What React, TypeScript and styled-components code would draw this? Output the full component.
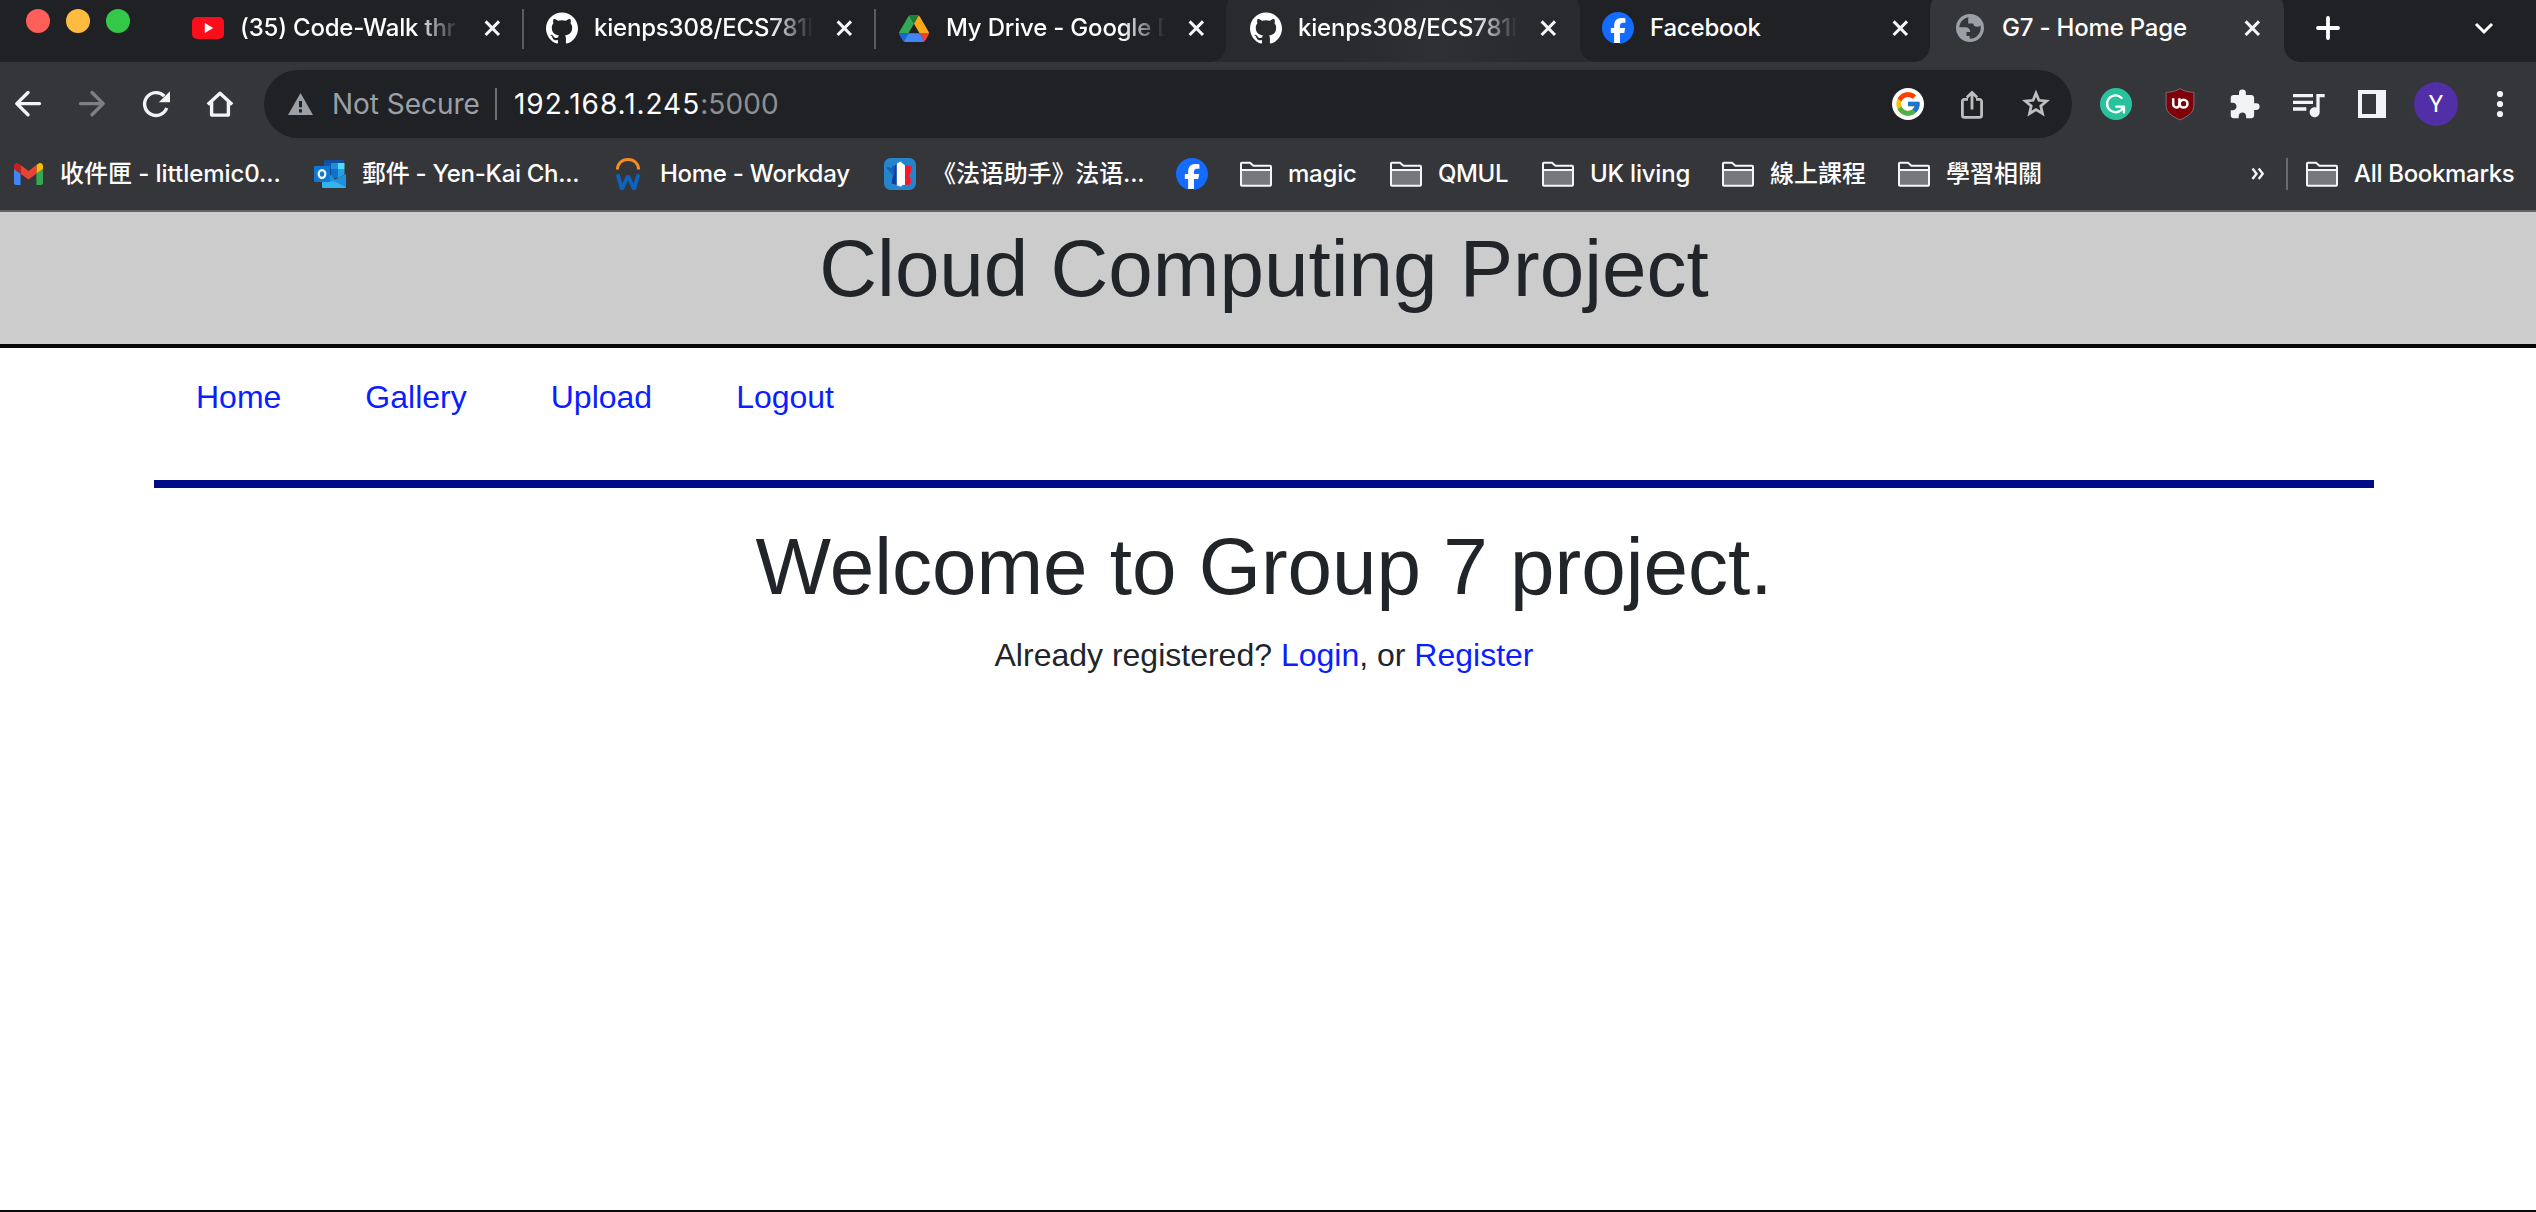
import React from "react";
import styled, { createGlobalStyle, css } from "styled-components";
import { FcGoogle } from "react-icons/fc";
import { SiFacebook, SiGithub } from "react-icons/si";
import { MdExtension, MdQueueMusic } from "react-icons/md";

const ui = `Inter, "Noto Sans CJK TC", sans-serif`;
const pageFont = `"Liberation Sans", Arial, sans-serif`;

const GlobalStyle = createGlobalStyle`
  *, *::before, *::after { box-sizing: border-box; }
  body { margin: 0; background: #fff; overflow: hidden; }
  svg { display: block; flex: none; }
`;

/* ---------- window ---------- */

const Window = styled.div`
  display: flex;
  flex-direction: column;
  width: 2536px;
  height: 1212px;
  border-bottom: 2px solid #0a090b;
  overflow: hidden;
`;

/* ---------- tab strip ---------- */

const TabStrip = styled.div`
  display: flex;
  height: 62px;
  background: #202124;
  overflow: hidden;
`;

const TrafficLights = styled.div`
  display: flex;
  gap: 16px;
  width: 172px;
  padding: 9px 0 0 26px;
`;

const Light = styled.span<{ $color: string }>`
  width: 24px;
  height: 24px;
  border-radius: 50%;
  background: ${(p) => p.$color};
`;

type TabState = "idle" | "hover" | "active";

const tabFill = (color: string) => css`
  &::before {
    content: "";
    position: absolute;
    z-index: -1;
    top: -7px;
    bottom: 0;
    left: -2px;
    right: 0;
    border-radius: 16px 16px 0 0;
    background: ${color};
  }
  &::after {
    content: "";
    position: absolute;
    z-index: -1;
    bottom: 0;
    left: -18px;
    right: -16px;
    height: 16px;
    background:
      radial-gradient(circle at 0 0, transparent 15.5px, ${color} 16.2px) left / 16px 16px no-repeat,
      radial-gradient(circle at 16px 0, transparent 15.5px, ${color} 16.2px) right / 16px 16px no-repeat;
  }
`;

const TabBox = styled.div<{ $state: TabState; $divider?: boolean }>`
  position: relative;
  isolation: isolate;
  display: flex;
  align-items: center;
  flex: none;
  width: 352px;
  height: 62px;
  padding: 0 23px 6px 22px;
  &:nth-child(2) {
    padding-left: 20px;
  }
  ${(p) => p.$state === "active" && tabFill("#35363a")}
  ${(p) => p.$state === "hover" && tabFill("#292a2d")}
  ${(p) =>
    p.$divider &&
    css`
      background: linear-gradient(#5b5c5f, #5b5c5f) right 9px / 2px 40px no-repeat;
    `}
`;

const HoverGlow = styled.span`
  position: absolute;
  z-index: -1;
  inset: 0;
  background: radial-gradient(circle 100px at 208px 48px, #2f3034, #2f303400);
`;

const Favicon = styled.span`
  display: grid;
  place-items: center;
  flex: none;
  width: 32px;
  height: 32px;
`;

const TabTitle = styled.span<{ $fade?: boolean }>`
  flex: 1;
  min-width: 0;
  margin: 0 22px 0 16px;
  overflow: hidden;
  white-space: nowrap;
  font: 450 24px/32px ${ui};
  letter-spacing: -0.2px;
  color: #fff;
  ${(p) =>
    p.$fade &&
    css`
      mask-image: linear-gradient(90deg, #000 176px, transparent 219px);
    `}
`;

const StripTools = styled.div`
  display: flex;
  flex: 1;
  justify-content: space-between;
  align-items: center;
  padding: 0 42px 6px 32px;
`;

/* ---------- toolbar ---------- */

const Toolbar = styled.div`
  display: flex;
  align-items: center;
  gap: 24px;
  height: 84px;
  padding: 0 16px 0 8px;
  background: #35363a;
`;

const Slot = styled.span`
  display: grid;
  place-items: center;
  flex: none;
  width: 40px;
  height: 40px;
  color: #f1f3f4;
`;

const DimSlot = styled(Slot)`
  color: #bdbdbe;
`;

const MusicSlot = styled(Slot)`
  padding-bottom: 4px;
  padding-right: 2px;
`;

const Omnibox = styled.div`
  display: flex;
  align-items: center;
  flex: none;
  width: 1808px;
  height: 68px;
  padding: 0 16px 0 24px;
  border-radius: 34px;
  background: #202124;
  font: 400 28px/36px ${ui};
  white-space: nowrap;
`;

const Security = styled.span`
  width: 163px;
  margin-left: 19px;
  color: #9aa0a6;
  letter-spacing: -0.03px;
`;

const OmniDivider = styled.span`
  width: 2px;
  height: 32px;
  margin-right: 17px;
  background: #6f7073;
`;

const Host = styled.span`
  color: #fff;
  letter-spacing: 0.95px;
`;

const Port = styled.span`
  flex: 1;
  color: #8e8f91;
  letter-spacing: 0.1px;
`;

const OmniActions = styled.div`
  display: flex;
  gap: 24px;
`;

const GoogleBadge = styled.span`
  display: grid;
  place-items: center;
  width: 32px;
  height: 32px;
  border-radius: 50%;
  background: #fff;
`;

const Avatar = styled.span`
  display: grid;
  place-items: center;
  width: 44px;
  height: 44px;
  margin: -2px;
  border-radius: 50%;
  background: #512fa6;
  color: #fff;
  font: 400 24px/44px Roboto, sans-serif;
`;

/* ---------- bookmarks ---------- */

const BookmarksBar = styled.div`
  display: flex;
  align-items: center;
  gap: 32px;
  height: 66px;
  padding: 0 22px 8px 12px;
  border-bottom: 2px solid #616265;
  background: #35363a;
`;

const BookmarkItem = styled.span`
  display: flex;
  align-items: center;
  flex: none;
  gap: 16px;
`;

const BookmarkLabel = styled.span<{ $width: number; $spacing?: number }>`
  width: ${(p) => p.$width}px;
  white-space: nowrap;
  font: 450 24px/32px ${ui};
  letter-spacing: ${(p) => p.$spacing ?? -0.2}px;
  color: #fff;
`;

const BookmarksEnd = styled.div`
  display: flex;
  align-items: center;
  gap: 18px;
  margin-left: auto;
`;

const BookmarksDivider = styled.span`
  width: 2px;
  height: 32px;
  margin-left: 3px;
  background: #6a6b6e;
`;

/* ---------- web page ---------- */

const Page = styled.div`
  flex: 1;
  background: #fff;
  color: #212529;
  font: 400 32px/48px ${pageFont};
`;

const SiteHeader = styled.header`
  height: 136px;
  padding: 9px 8px 0 0;
  border-bottom: 4px solid #080808;
  background: #ccc;
  text-align: center;
`;

const Heading = styled.h1`
  margin: 0;
  font: 400 80px/96px ${pageFont};
`;

const Container = styled.div`
  width: 2220px;
  margin-left: 154px;
`;

const Nav = styled.nav`
  display: flex;
  gap: 84px;
  height: 140px;
  padding: 25px 42px 0;
  border-bottom: 8px solid #000b85;
`;

const Link = styled.a`
  color: #0a1eff;
  text-decoration: none;
`;

const Main = styled.main`
  padding-top: 31px;
  text-align: center;
`;

const Prompt = styled.p`
  margin: 16px 0 0;
`;

/* ---------- icons ---------- */

const stroke = { fill: "none", stroke: "currentColor" } as const;

const Close = () => (
  <svg width="17" height="17" viewBox="0 0 17 17" {...stroke} stroke="#f4f5f6" strokeWidth="3">
    <path d="M1.6 1.4 15 15M15 1.4 1.6 15" />
  </svg>
);

const YouTube = () => (
  <svg width="32" height="32" viewBox="0 0 32 32">
    <rect y="5" width="32" height="22" rx="5" fill="#fc0d1b" />
    <path d="M12.8 11v10l8.4-5z" fill="#fff" />
  </svg>
);

const GitHub = () => <SiGithub size={32} color="#fff" />;

const FacebookDisc = styled.span`
  display: grid;
  width: 32px;
  height: 32px;
  border-radius: 50%;
  background: radial-gradient(circle, #fff 15px, transparent 15.5px);
`;

const Facebook = () => (
  <FacebookDisc>
    <SiFacebook size={32} color="#146bff" />
  </FacebookDisc>
);

const Drive = () => (
  <svg width="30" height="27" viewBox="0 0 87.3 78">
    <path fill="#1967d2" d="m6.6 66.85 3.85 6.65c.8 1.4 1.95 2.5 3.3 3.3l13.75-23.8h-27.5c0 1.55.4 3.1 1.2 4.5z" />
    <path fill="#34a853" d="m43.65 25-13.75-23.8c-1.35.8-2.5 1.9-3.3 3.3l-25.4 44a9.06 9.06 0 0 0-1.2 4.5h27.5z" />
    <path fill="#ea4335" d="m73.55 76.8c1.35-.8 2.5-1.9 3.3-3.3l1.6-2.75 7.65-13.25c.8-1.4 1.2-2.95 1.2-4.5h-27.502l5.852 11.5z" />
    <path fill="#188038" d="m43.65 25 13.75-23.8c-1.35-.8-2.9-1.2-4.5-1.2h-18.5c-1.6 0-3.15.45-4.5 1.2z" />
    <path fill="#4285f4" d="m59.8 53h-32.3l-13.75 23.8c1.35.8 2.9 1.2 4.5 1.2h50.8c1.6 0 3.15-.45 4.5-1.2z" />
    <path fill="#fba919" d="m73.4 26.5-12.7-22c-.8-1.4-1.95-2.5-3.3-3.3l-13.75 23.8 16.15 28h27.45c0-1.55-.4-3.1-1.2-4.5z" />
  </svg>
);

const Globe = () => (
  <svg width="28" height="28" viewBox="0 0 28 28">
    <circle cx="14" cy="14" r="14" fill="#9aa0a6" />
    <path
      fill="#35363a"
      d="M12.600 3.200C7.400 4 3.600 8.200 3.300 13.300H9.500c2.600 0 4.700 2 4.700 4.600h-3.700v4.200h3.200v2.700c6.300 0 11-5 11-10.800 0-1-.1-1.800-.3-2.600-.8.900-1.900 1.400-3.200 1.400-2.300 0-3.800-1.200-4-3.300h-5V6.200c0-1.200.1-2.200.4-3z"
    />
  </svg>
);

const Plus = () => (
  <svg width="24" height="24" viewBox="0 0 24 24" {...stroke} stroke="#fff" strokeWidth="3.8" strokeLinecap="round">
    <path d="M12 2v20M2 12h20" />
  </svg>
);

const Chevron = () => (
  <svg width="20" height="14" viewBox="0 0 20 14" {...stroke} stroke="#fff" strokeWidth="3">
    <path d="m2 3 8 8 8-8" />
  </svg>
);

const Back = () => (
  <svg width="40" height="40" viewBox="0 0 40 40" {...stroke} strokeWidth="3.4" strokeLinecap="round" strokeLinejoin="round">
    <path d="M31.500 19.600H9M20 8.500 8.800 19.600 20 30.800" />
  </svg>
);

const Forward = () => (
  <svg width="40" height="40" viewBox="0 0 40 40" {...stroke} stroke="#7f8083" strokeWidth="3.4" strokeLinecap="round" strokeLinejoin="round">
    <path d="M8.500 19.600H31M20 8.500l11.200 11.100L20 30.800" />
  </svg>
);

const Reload = () => (
  <svg width="40" height="40" viewBox="0 0 40 40" {...stroke} strokeWidth="3.4">
    <path d="M30.700 24A11.400 11.400 0 1 1 28.300 12.200" />
    <path d="M34 7.200v11.100H22.800z" fill="currentColor" stroke="none" />
  </svg>
);

const Home = () => (
  <svg width="40" height="40" viewBox="0 0 40 40" {...stroke} strokeWidth="3.4" strokeLinejoin="round">
    <path d="M7.800 20.600 20 9.300l12.200 11.300M11.600 18v13.100h16.800V18" />
  </svg>
);

const Warning = () => (
  <svg width="25" height="24" viewBox="0 0 25 24">
    <path d="M12.500 1 25 23H0z" fill="#9aa0a6" />
    <path d="M12.500 9v6.200M12.500 17.300v3.200" stroke="#202124" strokeWidth="3" />
  </svg>
);

const Share = () => (
  <svg width="40" height="40" viewBox="0 0 40 40" {...stroke} strokeWidth="2.8">
    <path d="M16 15.300h-3.400a2.200 2.200 0 0 0-2.200 2.200v13.700a2.200 2.200 0 0 0 2.200 2.200h14.800a2.200 2.200 0 0 0 2.200-2.200V17.500a2.200 2.200 0 0 0-2.200-2.200H24M20 25.500V8.600M14.800 13.600 20 8.400l5.200 5.200" />
  </svg>
);

const Star = () => (
  <svg width="40" height="40" viewBox="0 0 40 40" {...stroke} strokeWidth="2.8">
    <path d="M20 9.200l2.900 7.100 7.700.7-5.800 5 1.700 7.500-6.500-3.900-6.500 3.900 1.700-7.500-5.800-5 7.700-.7z" />
  </svg>
);

const Grammarly = () => (
  <svg width="40" height="40" viewBox="0 0 40 40">
    <circle cx="20" cy="20" r="16" fill="#28c29c" />
    <g fill="none" stroke="#fff" strokeWidth="2.400" strokeLinecap="round" strokeLinejoin="round">
      <path d="M25.600 14A8.400 8.400 0 1 0 26.800 24" />
      <path d="M20.300 22.600h7.600v5.600" />
    </g>
  </svg>
);

const UBlock = () => (
  <svg width="40" height="40" viewBox="0 0 40 40">
    <path
      d="M20 4.600c3.600 2.300 8.400 3.700 13.900 3.700v13.200c0 6.800-5.600 10.600-13.900 14.400C11.700 32.100 6.100 28.300 6.100 21.500V8.300C11.600 8.300 16.400 6.900 20 4.600z"
      fill="#800009"
      stroke="#747074"
    />
    <g fill="none" stroke="#fff" strokeWidth="2.500">
      <path d="M13.200 14.300v5.900a3.200 3.200 0 0 0 3.200 3.200c1.800 0 3-1.200 3-3.200v-5.900" />
      <circle cx="23.600" cy="19.700" r="3.900" />
    </g>
  </svg>
);

const SidePanel = () => (
  <svg width="28" height="28" viewBox="0 0 28 28">
    <path fillRule="evenodd" fill="currentColor" d="M0 0h28v28H0zM4 4v20h14V4z" />
  </svg>
);

const Menu = () => (
  <svg width="40" height="40" viewBox="0 0 40 40" fill="currentColor">
    <circle cx="20" cy="10" r="3.100" />
    <circle cx="20" cy="20" r="3.100" />
    <circle cx="20" cy="30" r="3.100" />
  </svg>
);

const Gmail = () => (
  <svg width="29" height="22" viewBox="52 42 88 66">
    <path fill="#4285f4" d="M58 108h14V74L52 59v43c0 3.320 2.690 6 6 6" />
    <path fill="#34a853" d="M120 108h14c3.320 0 6-2.690 6-6V59l-20 15" />
    <path fill="#fbbc04" d="M120 48v26l20-15v-8c0-7.420-8.470-11.650-14.400-7.200" />
    <path fill="#ea4335" d="M72 74V48l24 18 24-18v26L96 92" />
    <path fill="#c5221f" d="M52 51v8l20 15V48l-5.600-4.200c-5.940-4.450-14.400-.22-14.400 7.200" />
  </svg>
);

const Outlook = () => (
  <svg width="32" height="32" viewBox="0 0 32 32">
    <rect x="10" y="2" width="20" height="9" rx="1" fill="#0f4f9e" />
    <path d="M10 5h7v7h-7z" fill="#0c59a8" />
    <path d="M17 5h7v6h-7z" fill="#1f8fdc" />
    <path d="M24 5h6.500v6H24z" fill="#52dbfb" />
    <path d="M10 11h7v8h-7z" fill="#0f4a8c" />
    <path d="M17 11h7v9h-7z" fill="#1272c8" />
    <path d="M24 11h6.500v5.500L24 20z" fill="#28a0e6" />
    <path d="M8 17h9l4 4.500L32 16v12.500a1.500 1.500 0 0 1-1.500 1.500h-21A1.500 1.500 0 0 1 8 28.500z" fill="#1f90dc" />
    <path d="m20 23.200 12 6a1.500 1.500 0 0 1-1.500.8h-21A1.500 1.500 0 0 1 8 28.500V24z" fill="#35b3ee" />
    <rect y="8" width="16" height="16" rx="1.300" fill="#0f77d4" />
    <ellipse cx="8" cy="16" rx="3.300" ry="3.900" fill="none" stroke="#fff" strokeWidth="2.200" />
  </svg>
);

const Workday = () => (
  <svg width="32" height="32" viewBox="0 0 32 32" fill="none">
    <path d="M5.400 11.500C5.400 5.500 10 1.500 16 1.500s10.600 4 10.600 10" stroke="#f88d1f" strokeWidth="3" />
    <path d="m5.600 16.200 4.300 15L16 18l6.100 13.200 4.300-15" stroke="#0c62bd" strokeWidth="3.900" strokeLinejoin="bevel" />
  </svg>
);

const FrenchHelper = () => (
  <svg width="32" height="32" viewBox="0 0 32 32">
    <rect width="32" height="32" rx="6.500" fill="#2585cb" />
    <path d="M2.500 9.500 8 10V7.500l2.500.8L13 5v22l-5.500-1.500L9 17z" fill="#0b3fa6" />
    <path d="M2.500 9.500 8 10V7.500l2.500.8-.3 10L9 17z" fill="#1761ba" />
    <path d="M12.800 5.500 16.500 3.500l2.700 2.500 2 1.500v19.300l-2.700.2-1.500 1.700-4.200-1.500z" fill="#fff" />
    <path d="m21 7 6.800 1.500-.8 6-2.200 3.200 1.700 2.500.8 4-3 2.800-3.300-.2z" fill="#f5192f" />
  </svg>
);

const Folder = () => (
  <svg width="32" height="26" viewBox="0 0 32 26">
    <path d="M1 9h30v15.500H1z" fill="#77787b" />
    <path d="M1 24.500V2.500a.8.8 0 0 1 .8-.8H10l3.400 3H30a1 1 0 0 1 1 1v18a1 1 0 0 1-1 1H2a1 1 0 0 1-1-1zM1 9h30" fill="none" stroke="#f6f6f7" strokeWidth="2" />
  </svg>
);

const Overflow = () => (
  <svg width="14" height="14" viewBox="0 0 14 14" {...stroke} stroke="#f1f3f4" strokeWidth="2.400">
    <path d="m1.500 1.500 4 5.200-4 5.200M7.700 1.500l4 5.200-4 5.200" />
  </svg>
);

/* ---------- data ---------- */

type Tab = { title: string; icon: React.ReactNode; state?: TabState; divider?: boolean; fade?: boolean };

const tabs: Tab[] = [
  { title: "(35) Code-Walk thr", icon: <YouTube />, divider: true, fade: true },
  { title: "kienps308/ECS781P", icon: <GitHub />, divider: true, fade: true },
  { title: "My Drive - Google D", icon: <Drive />, fade: true },
  { title: "kienps308/ECS781P", icon: <GitHub />, state: "hover", fade: true },
  { title: "Facebook", icon: <Facebook /> },
  { title: "G7 - Home Page", icon: <Globe />, state: "active" },
];

type Bookmark = { icon: React.ReactNode; label?: string; width?: number; spacing?: number };

const bookmarks: Bookmark[] = [
  { icon: <Gmail />, label: "收件匣 - littlemic0...", width: 222, spacing: -0.05 },
  { icon: <Outlook />, label: "郵件 - Yen-Kai Ch...", width: 218, spacing: -0.3 },
  { icon: <Workday />, label: "Home - Workday", width: 192, spacing: -0.27 },
  { icon: <FrenchHelper />, label: "《法语助手》法语...", width: 212, spacing: -0.12 },
  { icon: <Facebook /> },
  { icon: <Folder />, label: "magic", width: 70 },
  { icon: <Folder />, label: "QMUL", width: 72, spacing: -0.4 },
  { icon: <Folder />, label: "UK living", width: 100 },
  { icon: <Folder />, label: "線上課程", width: 96, spacing: 0 },
  { icon: <Folder />, label: "學習相關", width: 96, spacing: 0 },
];

const navLinks = ["Home", "Gallery", "Upload", "Logout"];

export default function App() {
  return (
    <Window>
      <GlobalStyle />
      <TabStrip>
        <TrafficLights>
          <Light $color="#fe5f5b" />
          <Light $color="#fdbb40" />
          <Light $color="#34c84a" />
        </TrafficLights>
        {tabs.map((tab, i) => (
          <TabBox key={i} $state={tab.state ?? "idle"} $divider={tab.divider}>
            {tab.state === "hover" && <HoverGlow />}
            <Favicon>{tab.icon}</Favicon>
            <TabTitle $fade={tab.fade}>{tab.title}</TabTitle>
            <Close />
          </TabBox>
        ))}
        <StripTools>
          <Plus />
          <Chevron />
        </StripTools>
      </TabStrip>

      <Toolbar>
        <Slot><Back /></Slot>
        <Slot><Forward /></Slot>
        <Slot><Reload /></Slot>
        <Slot><Home /></Slot>
        <Omnibox>
          <Warning />
          <Security>Not Secure</Security>
          <OmniDivider />
          <Host>192.168.1.245</Host>
          <Port>:5000</Port>
          <OmniActions>
            <Slot>
              <GoogleBadge>
                <FcGoogle size={28} />
              </GoogleBadge>
            </Slot>
            <DimSlot><Share /></DimSlot>
            <DimSlot><Star /></DimSlot>
          </OmniActions>
        </Omnibox>
        <Slot><Grammarly /></Slot>
        <Slot><UBlock /></Slot>
        <Slot><MdExtension size={33} /></Slot>
        <MusicSlot><MdQueueMusic size={40} /></MusicSlot>
        <Slot><SidePanel /></Slot>
        <Slot><Avatar>Y</Avatar></Slot>
        <Slot><Menu /></Slot>
      </Toolbar>

      <BookmarksBar>
        {bookmarks.map((b, i) => (
          <BookmarkItem key={i}>
            <Favicon>{b.icon}</Favicon>
            {b.label && (
              <BookmarkLabel $width={b.width ?? 0} $spacing={b.spacing}>
                {b.label}
              </BookmarkLabel>
            )}
          </BookmarkItem>
        ))}
        <BookmarksEnd>
          <Overflow />
          <BookmarksDivider />
          <BookmarkItem>
            <Favicon><Folder /></Favicon>
            <BookmarkLabel $width={160} $spacing={-0.32}>All Bookmarks</BookmarkLabel>
          </BookmarkItem>
        </BookmarksEnd>
      </BookmarksBar>

      <Page>
        <SiteHeader>
          <Heading>Cloud Computing Project</Heading>
        </SiteHeader>
        <Container>
          <Nav>
            {navLinks.map((label) => (
              <Link key={label} href="#">{label}</Link>
            ))}
          </Nav>
          <Main>
            <Heading>Welcome to Group 7 project.</Heading>
            <Prompt>
              Already registered? <Link href="#">Login</Link>, or <Link href="#">Register</Link>
            </Prompt>
          </Main>
        </Container>
      </Page>
    </Window>
  );
}
